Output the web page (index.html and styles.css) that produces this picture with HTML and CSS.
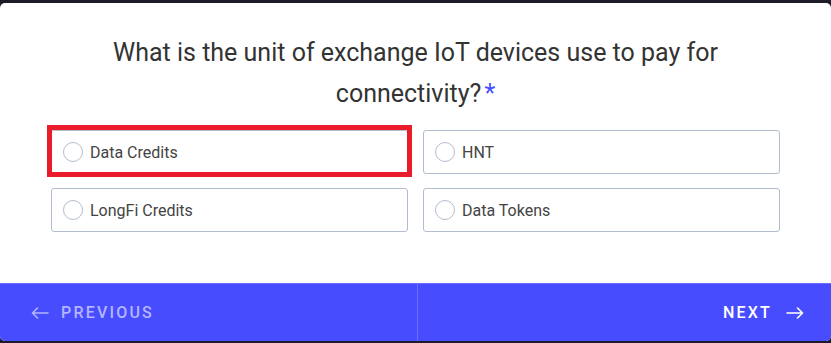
FILE: index.html
```html
<!DOCTYPE html>
<html>
<head>
<meta charset="utf-8">
<link rel="stylesheet" href="styles.css">
</head>
<body>
<div class="card">
  <div class="content">
    <h1 class="question">What is the unit of exchange IoT devices use to pay for connectivity?<span class="req">*</span></h1>
    <div class="options">
      <label class="option selected-mark"><span class="radio"></span><span class="label">Data Credits</span></label>
      <label class="option"><span class="radio"></span><span class="label">HNT</span></label>
      <label class="option"><span class="radio"></span><span class="label">LongFi Credits</span></label>
      <label class="option"><span class="radio"></span><span class="label">Data Tokens</span></label>
    </div>
  </div>
  <div class="footer">
    <div class="nav prev">
      <svg class="arrow" width="18" height="12" viewBox="0 0 18 12"><path d="M17 6H1.5M6.5 1L1.5 6l5 5" fill="none" stroke="currentColor" stroke-width="1.6" stroke-linecap="round" stroke-linejoin="round"/></svg>
      <span>PREVIOUS</span>
    </div>
    <div class="nav next">
      <span>NEXT</span>
      <svg class="arrow" width="18" height="12" viewBox="0 0 18 12"><path d="M1 6h15.5M11.5 1l5 5-5 5" fill="none" stroke="currentColor" stroke-width="1.6" stroke-linecap="round" stroke-linejoin="round"/></svg>
    </div>
  </div>
</div>
</body>
</html>
```
FILE: styles.css
```css
html, body {
  margin: 0;
  padding: 0;
}
body {
  background: #1b1b29;
  padding-top: 3px;
  height: 343px;
  box-sizing: border-box;
  font-family: Roboto, "Liberation Sans", sans-serif;
}
.card {
  background: #ffffff;
  border-radius: 5px;
  height: 338px;
  display: flex;
  flex-direction: column;
  overflow: hidden;
}
.content {
  padding: 29px 51px 0 51px;
  flex: 1;
}
.question {
  margin: 0 auto;
  width: 700px;
  text-align: center;
  font-weight: 400;
  font-size: 25px;
  line-height: 41px;
  color: #333333;
}
.req {
  color: #4a4dff;
  margin-left: 3px;
}
.options {
  margin-top: 16px;
  display: grid;
  grid-template-columns: 357px 357px;
  column-gap: 15px;
  row-gap: 14px;
}
.option {
  position: relative;
  height: 44px;
  box-sizing: border-box;
  border: 1px solid #b3bdd0;
  border-radius: 3px;
  display: flex;
  align-items: center;
  padding-left: 11px;
}
.selected-mark::after {
  content: "";
  position: absolute;
  top: -6px;
  bottom: -4px;
  left: -5px;
  right: -5px;
  border: 5px solid #ea1c2b;
}
.radio {
  width: 20px;
  height: 20px;
  box-sizing: border-box;
  border: 1px solid #b3bdd0;
  border-radius: 50%;
  margin-right: 7px;
}
.label {
  font-size: 16px;
  color: #444444;
}
.footer {
  height: 57px;
  background: #484cff;
  border-top: 1px solid #6a6dff;
  display: flex;
}
.nav {
  flex: 1;
  display: flex;
  align-items: center;
  gap: 12px;
  font-size: 16px;
  font-weight: 500;
  letter-spacing: 2.2px;
}
.prev {
  color: #b3b6ff;
  padding-left: 31px;
}
.next {
  color: #ffffff;
  justify-content: flex-end;
  padding-right: 27px;
  border-left: 1px solid #6a6dff;
}
.next span {
  margin-right: 2px;
}
```
